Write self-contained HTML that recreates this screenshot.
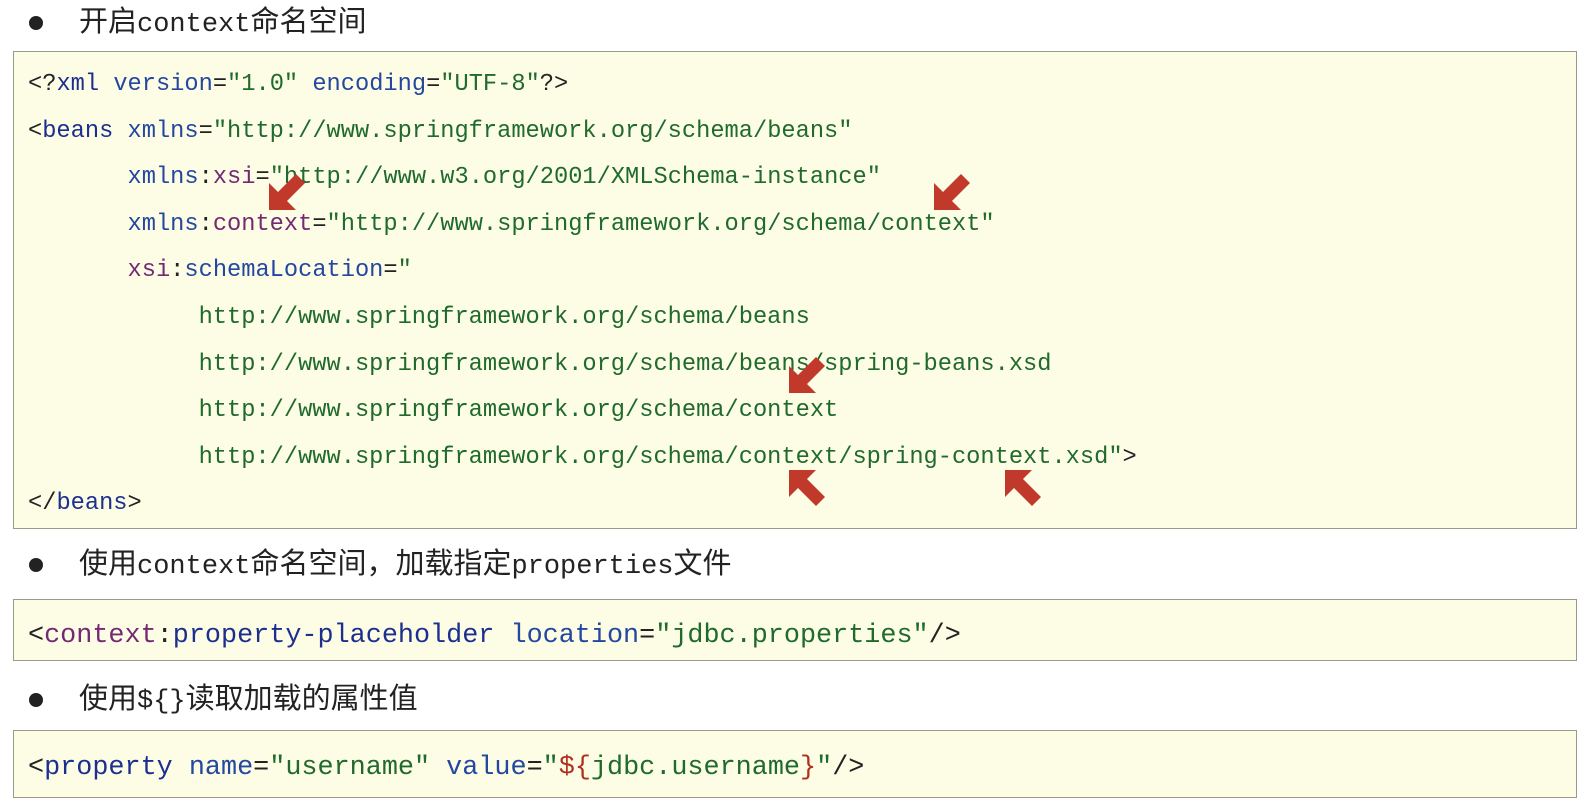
<!DOCTYPE html>
<html><head><meta charset="utf-8"><style>
body{margin:0;width:1595px;height:812px;background:#fff;position:relative;overflow:hidden;font-family:"Liberation Sans","Noto Sans CJK SC",sans-serif}
.h{position:absolute;left:79px;font-size:29px;color:#222;line-height:34px;font-family:"Liberation Sans","Noto Sans CJK SC",sans-serif}
.h .m{font-family:"Liberation Mono","Noto Sans CJK SC",monospace;font-size:27px}
.dot{position:absolute;left:29px;width:14px;height:14px;border-radius:50%;background:#222}
.box{position:absolute;left:13px;width:1562px;background:#fdfde6;border:1px solid #9a9a8c}
pre{margin:0;font-family:"Liberation Mono",monospace;font-size:23.7px;position:absolute;left:14px;color:#222;line-height:46.6px}
pre.big{font-size:26.8px}
.t{color:#1c2f8f}.a{color:#2447a0}.p{color:#742a72}.v{color:#1f6a2c}.r{color:#b0301e}
</style></head><body>
<div class="dot" style="top:16px"></div><div class="h" style="top:5px">开启<span class="m">context</span>命名空间</div>
<div class="box" style="top:51px;height:476px">
<pre style="top:10px">&lt;?<span class="t">xml</span> <span class="a">version</span>=<span class="v">"1.0"</span> <span class="a">encoding</span>=<span class="v">"UTF-8"</span>?&gt;
&lt;<span class="t">beans</span> <span class="a">xmlns</span>=<span class="v">"http://www.springframework.org/schema/beans"</span>
       <span class="a">xmlns</span>:<span class="p">xsi</span>=<span class="v">"http://www.w3.org/2001/XMLSchema-instance"</span>
       <span class="a">xmlns</span>:<span class="p">context</span>=<span class="v">"http://www.springframework.org/schema/context"</span>
       <span class="p">xsi</span>:<span class="a">schemaLocation</span>=<span class="v">"</span>
            <span class="v">http://www.springframework.org/schema/beans</span>
            <span class="v">http://www.springframework.org/schema/beans/spring-beans.xsd</span>
            <span class="v">http://www.springframework.org/schema/context</span>
            <span class="v">http://www.springframework.org/schema/context/spring-context.xsd"</span>&gt;
&lt;/<span class="t">beans</span>&gt;</pre>
</div>
<div class="dot" style="top:558px"></div><div class="h" style="top:547px">使用<span class="m">context</span>命名空间，加载指定<span class="m">properties</span>文件</div>
<div class="box" style="top:599px;height:60px"><pre class="big" style="top:13px">&lt;<span class="p">context</span>:<span class="t">property-placeholder</span> <span class="a">location</span>=<span class="v">"jdbc.properties"</span>/&gt;</pre></div>
<div class="dot" style="top:693px"></div><div class="h" style="top:682px">使用<span class="m">${}</span>读取加载的属性值</div>
<div class="box" style="top:730px;height:66px"><pre class="big" style="top:14px">&lt;<span class="t">property</span> <span class="a">name</span>=<span class="v">"username"</span> <span class="a">value</span>=<span class="v">"</span><span class="r">${</span><span class="v">jdbc.username</span><span class="r">}</span><span class="v">"</span>/&gt;</pre></div>
<svg width="1595" height="812" style="position:absolute;left:0;top:0">
<defs><polygon id="ar" points="0,0 0,-27 9,-18 27,-36 36,-27 18,-9 27,0" fill="#c0392b"/></defs>
<use href="#ar" transform="translate(269,210)"/>
<use href="#ar" transform="translate(934,210)"/>
<use href="#ar" transform="translate(789,393)"/>
<use href="#ar" transform="translate(789,470) scale(1,-1)"/>
<use href="#ar" transform="translate(1005,470) scale(1,-1)"/>
</svg>
</body></html>
